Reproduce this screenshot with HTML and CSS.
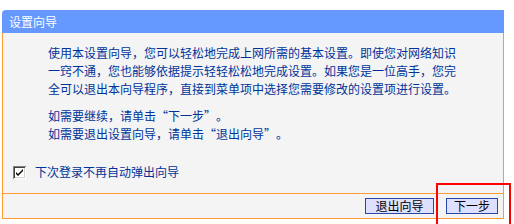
FILE: index.html
```html
<!DOCTYPE html>
<html lang="zh-CN">

<head>
    <meta charset="UTF-8">
    <meta name="viewport" content="width=device-width, initial-scale=1.0">
    <title>设置向导</title>
    <link rel="stylesheet" href="styles.css">
</head>

<body>
    <div class="panel">
        <div class="panel-title">设置向导</div>
        <div class="panel-body">
            <p class="intro">使用本设置向导，您可以轻松地完成上网所需的基本设置。即使您对网络知识<br>一窍不通，您也能够依据提示轻轻松松地完成设置。如果您是一位高手，您完<br>全可以退出本向导程序，直接到菜单项中选择您需要修改的设置项进行设置。</p>
            <p class="intro">如需要继续，请单击<span class="lq">“</span>下一步<span class="rq">”</span>。<br>如需要退出设置向导，请单击<span class="lq">“</span>退出向导<span class="rq">”</span>。</p>
            <label class="check-row">
                <span class="check-box">
                    <svg width="13" height="13" viewBox="0 0 13 13">
                        <rect x="0" y="0" width="13" height="13" fill="#808080"/>
                        <rect x="1" y="1" width="12" height="12" fill="#ffffff"/>
                        <rect x="1" y="1" width="11" height="11" fill="#404040"/>
                        <rect x="2" y="2" width="10" height="10" fill="#d4d0c8"/>
                        <rect x="2" y="2" width="9" height="9" fill="#ffffff"/>
                        <path d="M3 6 L5 8 L10 3 L10 5 L5 10 L3 8 Z" fill="#000000"/>
                    </svg>
                </span>
                下次登录不再自动弹出向导
            </label>
        </div>
        <div class="panel-foot">
            <button class="btn" id="exit">退出向导</button>
            <button class="btn" id="next">下一步</button>
        </div>
    </div>
    <div class="mark"></div>
</body>

</html>
```

FILE: styles.css
```css
body {
    margin: 0;
    background-color: #ffffff;
    font-family: "Noto Sans CJK SC", "Noto Sans", sans-serif;
    font-size: 12px;
    overflow: hidden;
}

.panel {
    margin: 10px 0 0 2px;
    width: 502px;
}

.panel-title {
    height: 23px;
    line-height: 23px;
    padding-left: 7px;
    background-color: #6699ff;
    color: #ffffff;
    border-radius: 4px 0 0 0;
}

.panel-body {
    background-color: #f4f4f4;
    border-left: 1px solid #ff9933;
    border-right: 1px solid #ff9933;
    border-bottom: 1px solid #ff9933;
    padding: 11px 0 14px 0;
}

.intro {
    margin: 0 0 9px 45px;
    line-height: 18px;
    color: #003399;
    white-space: nowrap;
}

.lq,
.rq {
    display: inline-block;
    width: 12px;
}

.lq {
    text-align: right;
}

.rq {
    text-align: left;
}

.check-row {
    display: flex;
    align-items: center;
    margin: 22px 0 0 10px;
    color: #003399;
    line-height: 14px;
}

.check-box {
    display: flex;
    width: 13px;
    height: 13px;
    margin-right: 9px;
}

.panel-foot {
    display: flex;
    justify-content: flex-end;
    gap: 12px;
    height: 25px;
    padding: 4px 5px 0 0;
    box-sizing: border-box;
    background-color: #f4f4f4;
    border-left: 1px solid #ff9933;
    border-right: 1px solid #ff9933;
    border-bottom: 1px solid #ff9933;
}

.btn {
    height: 16px;
    padding: 0;
    margin: 0;
    font-family: "Noto Sans CJK SC", sans-serif;
    font-size: 12px;
    line-height: 14px;
    color: #000000;
    background-color: #dde0ff;
    border: 1px solid #2848a8;
    cursor: pointer;
}

#exit {
    width: 69px;
}

#next {
    width: 52px;
}

.mark {
    position: absolute;
    left: 436px;
    top: 183px;
    width: 71px;
    height: 39px;
    border: 2px solid #ff0000;
    border-bottom: none;
}
```
